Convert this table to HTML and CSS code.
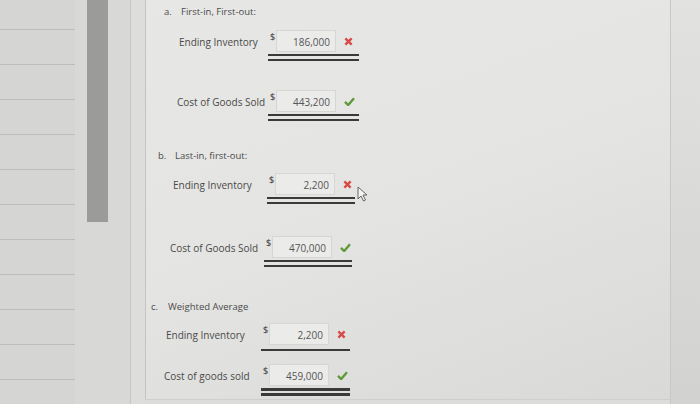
FILE: index.html
```html
<!DOCTYPE html>
<html lang="en">
<head>
    <meta charset="UTF-8">
    <meta name="viewport" content="width=device-width, initial-scale=1.0">
    <title>Inventory Methods</title>
    <link rel="stylesheet" href="styles.css">
</head>
<body>

    <div class="list">
        <div class="list-row first"></div>
        <div class="list-row"></div>
        <div class="list-row"></div>
        <div class="list-row"></div>
        <div class="list-row"></div>
        <div class="list-row"></div>
        <div class="list-row"></div>
        <div class="list-row"></div>
        <div class="list-row"></div>
        <div class="list-row"></div>
        <div class="list-row"></div>
        <div class="list-row"></div>
    </div>
    <div class="track">
        <div class="thumb"></div>
    </div>
    <div class="gutter"></div>

    <div class="panel">
        <div class="section sec-a">
            <div class="heading"><span class="marker">a.</span>First-in, First-out:</div>
            <div class="row gap-a1">
                <span class="label">Ending Inventory</span>
                <div class="field double">
                    <span class="cur">$</span>
                    <span class="box">186,000</span>
                    <span class="mark wrong"><svg viewBox="0 0 10 10" width="9" height="9"><path d="M1.5 1.5 L8.5 8.5 M8.5 1.5 L1.5 8.5" stroke="#d84a48" stroke-width="2.6"/></svg></span>
                </div>
            </div>
            <div class="row gap-a2 shift-2">
                <span class="label">Cost of Goods Sold</span>
                <div class="field double">
                    <span class="cur">$</span>
                    <span class="box">443,200</span>
                    <span class="mark right"><svg viewBox="0 0 12 10" width="11" height="9"><path d="M1 5.5 L4.5 9 L11 1.5" fill="none" stroke="#5f9a3a" stroke-width="2.6"/></svg></span>
                </div>
            </div>
        </div>

        <div class="section sec-b">
            <div class="heading"><span class="marker">b.</span>Last-in, first-out:</div>
            <div class="row gap-b1">
                <span class="label">Ending Inventory</span>
                <div class="field double">
                    <span class="cur">$</span>
                    <span class="box">2,200</span>
                    <span class="mark wrong"><svg viewBox="0 0 10 10" width="9" height="9"><path d="M1.5 1.5 L8.5 8.5 M8.5 1.5 L1.5 8.5" stroke="#d84a48" stroke-width="2.6"/></svg></span>
                </div>
            </div>
            <div class="row gap-b2 shift-3">
                <span class="label">Cost of Goods Sold</span>
                <div class="field double">
                    <span class="cur">$</span>
                    <span class="box">470,000</span>
                    <span class="mark right"><svg viewBox="0 0 12 10" width="11" height="9"><path d="M1 5.5 L4.5 9 L11 1.5" fill="none" stroke="#5f9a3a" stroke-width="2.6"/></svg></span>
                </div>
            </div>
            <svg class="pointer" viewBox="0 0 10 16" width="10" height="16"><path d="M1 1 L1 13 L4 10 L6.5 15 L8.5 14 L6 9 L10 9 Z" fill="#f4f4f2" stroke="#555" stroke-width="0.9"/></svg>
        </div>

        <div class="section sec-c">
            <div class="heading"><span class="marker">c.</span>Weighted Average</div>
            <div class="row gap-c1">
                <span class="label">Ending Inventory</span>
                <div class="field single">
                    <span class="cur">$</span>
                    <span class="box">2,200</span>
                    <span class="mark wrong"><svg viewBox="0 0 10 10" width="9" height="9"><path d="M1.5 1.5 L8.5 8.5 M8.5 1.5 L1.5 8.5" stroke="#d84a48" stroke-width="2.6"/></svg></span>
                </div>
            </div>
            <div class="row gap-c2 shift-2">
                <span class="label">Cost of goods sold</span>
                <div class="field double last">
                    <span class="cur">$</span>
                    <span class="box">459,000</span>
                    <span class="mark right"><svg viewBox="0 0 12 10" width="11" height="9"><path d="M1 5.5 L4.5 9 L11 1.5" fill="none" stroke="#5f9a3a" stroke-width="2.6"/></svg></span>
                </div>
            </div>
        </div>
    </div>

    <div class="edge"></div>

</body>
</html>
```

FILE: styles.css
```css
body {
    margin: 0;
    width: 700px;
    height: 404px;
    overflow: hidden;
    display: flex;
    font-family: "Open Sans", "Liberation Sans", sans-serif;
    background-color: #dcdcda;
    color: #4a4a4a;
}
.list {
    width: 75px;
    background-color: #d5d5d3;
}
.list-row {
    height: 34px;
    border-bottom: 1px solid #bdbdbb;
}
.list-row.first {
    height: 29px;
}
.track {
    width: 55px;
    background-color: #d8d8d6;
    padding-left: 12px;
    box-sizing: border-box;
}
.thumb {
    width: 21px;
    height: 222px;
    background-color: #9b9b99;
}
.gutter {
    width: 14px;
    background-color: #dddddb;
    border-left: 1px solid #c6c6c4;
}
.panel {
    width: 525px;
    height: 400px;
    background: linear-gradient(160deg, #e7e7e5 0%, #e4e4e2 50%, #d9d9d7 100%);
    border-left: 1px solid #c4c4c2;
    border-bottom: 1px solid #cfcfcd;
    box-sizing: border-box;
}
.edge {
    flex: 1;
    background: linear-gradient(180deg, #e2e2e0 0%, #d2d2d0 100%);
    border-left: 1px solid #c8c8c6;
}
.section {
    position: relative;
}
.sec-a {
    padding-top: 5px;
    padding-left: 18px;
}
.sec-b {
    margin-top: 28px;
    padding-left: 12px;
}
.sec-c {
    margin-top: 33px;
    padding-left: 5px;
}
.heading {
    font-size: 9.5px;
    line-height: 14px;
    height: 14px;
}
.marker {
    display: inline-block;
    width: 17px;
}
.row {
    display: flex;
    align-items: flex-start;
    padding-left: 15px;
}
.row.shift-2 {
    padding-left: 13px;
}
.row.shift-3 {
    padding-left: 12px;
}
.gap-a1 { margin-top: 11px; }
.gap-a2 { margin-top: 29px; }
.gap-b1 { margin-top: 10px; }
.gap-b2 { margin-top: 32px; }
.gap-c1 { margin-top: 9px; }
.gap-c2 { margin-top: 13px; }
.label {
    width: 89px;
    font-size: 10px;
    line-height: 24px;
    white-space: nowrap;
}
.shift-2 .label {
    width: 91px;
}
.sec-b .label {
    width: 94px;
}
.sec-c .label {
    width: 95px;
}
.sec-c .shift-2 .label {
    width: 97px;
}
.field {
    display: flex;
    align-items: center;
    width: 91px;
    padding-left: 2px;
    padding-bottom: 2px;
    box-sizing: border-box;
}
.sec-b .field {
    width: 88px;
}
.sec-c .field {
    width: 89px;
}
.field.double {
    border-bottom: 7px double #3a3a3a;
}
.field.double.last {
    border-bottom-width: 8px;
}
.field.single {
    padding-bottom: 4px;
    border-bottom: 2px solid #3a3a3a;
}
.cur {
    width: 6px;
    font-size: 9px;
    font-weight: 600;
    color: #555555;
    align-self: flex-start;
    line-height: 14px;
}
.box {
    width: 60px;
    height: 22px;
    line-height: 22px;
    box-sizing: border-box;
    background-color: #ebebea;
    border: 1px solid #d6d6d4;
    text-align: right;
    padding-right: 5px;
    font-size: 10px;
    color: #555555;
}
.mark {
    margin-left: 8px;
    display: flex;
    align-items: center;
}
.pointer {
    position: absolute;
    left: 211px;
    top: 37px;
}
```
